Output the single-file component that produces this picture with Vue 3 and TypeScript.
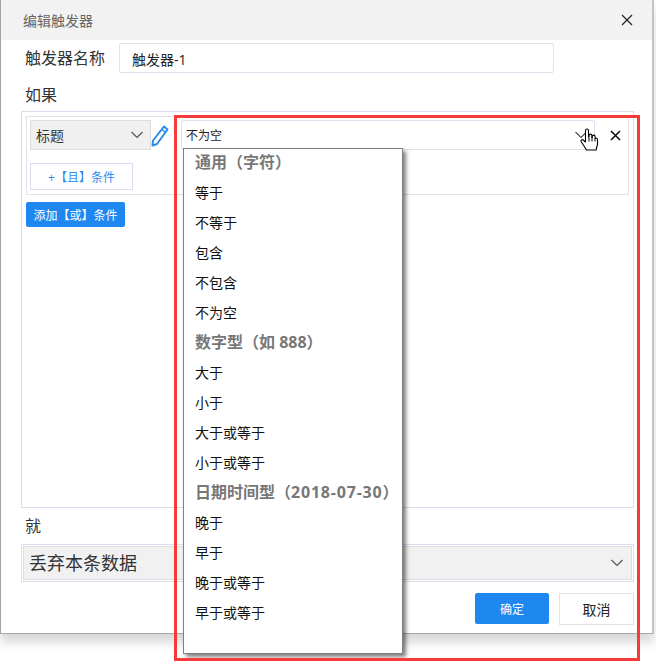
<script setup lang="ts">
type Row = { label: string; heading?: boolean; spaced?: string; tail?: string }
const options: Row[] = [
  { label: '通用（字符）', heading: true },
  { label: '等于' },
  { label: '不等于' },
  { label: '包含' },
  { label: '不包含' },
  { label: '不为空' },
  { label: '数字型（如 888）', heading: true },
  { label: '大于' },
  { label: '小于' },
  { label: '大于或等于' },
  { label: '小于或等于' },
  { label: '日期时间型（', heading: true, spaced: '2018-07-30', tail: '）' },
  { label: '晚于' },
  { label: '早于' },
  { label: '晚于或等于' },
  { label: '早于或等于' },
]
</script>

<template>
  <div class="page">
    <div class="dialog">
      <header class="head">
        <span class="title">编辑触发器</span>
        <svg class="close" width="12" height="12" viewBox="0 0 12 12"><path d="M1 1l10 10M11 1L1 11" stroke="#222" stroke-width="1.2" fill="none" /></svg>
      </header>
      <div class="body">
        <div class="name-row">
          <label class="label">触发器名称</label>
          <div class="name-input">触发器-1</div>
        </div>
        <div class="label if-label">如果</div>
        <section class="rules">
          <div class="and-box">
            <div class="cond">
              <div class="field-select">
                <span>标题</span>
                <svg width="14" height="8" viewBox="0 0 14 8"><path d="M1.5 1l5.5 5.5L12.5 1" stroke="#555" stroke-width="1.2" fill="none" /></svg>
              </div>
              <svg class="pencil" width="18" height="22" viewBox="0 0 18 22">
                <path d="M13 1.500l3.500 3L6 19l-4.500 1.500L2 15.500z" fill="none" stroke="#2a8cea" stroke-width="2" stroke-linejoin="round" />
                <path d="M11 4.500l3.500 3" stroke="#2a8cea" stroke-width="1.500" />
              </svg>
              <div class="op-input">
                <span>不为空</span>
                <svg class="op-arrow" width="14" height="8" viewBox="0 0 14 8"><path d="M1.500 1l5.500 5.500L12.500 1" stroke="#555" stroke-width="1.200" fill="none" /></svg>
              </div>
              <svg class="del" width="11" height="11" viewBox="0 0 11 11"><path d="M1 1l9 9M10 1l-9 9" stroke="#111" stroke-width="1.600" fill="none" /></svg>
            </div>
            <button class="add-and">+【且】条件</button>
          </div>
          <button class="add-or">添加【或】条件</button>
        </section>
        <div class="label then-label">就</div>
        <div class="action-wrap">
          <div class="action-select">
            <span class="action-text">丢弃本条数据</span>
            <svg width="14" height="8" viewBox="0 0 14 8"><path d="M1.500 1l5.500 5.500L12.500 1" stroke="#555" stroke-width="1.200" fill="none" /></svg>
          </div>
        </div>
        <div class="actions">
          <button class="ok">确定</button>
          <button class="cancel">取消</button>
        </div>
      </div>
    </div>

    <ul class="menu">
      <li v-for="o in options" :key="o.label" :class="{ heading: o.heading }">{{ o.label }}<span v-if="o.spaced" class="spaced">{{ o.spaced }}</span>{{ o.tail }}</li>
    </ul>
    <div class="red-box"></div>
    <svg class="hand" width="20" height="24" viewBox="0 0 20 24">
      <path d="M6.500 14V2.500a1.500 1.500 0 0 1 3 0V9h.5V7.500a1.400 1.400 0 0 1 2.800 0V9.500h.5V8.500a1.400 1.400 0 0 1 2.800 0V10.500h.3a1.300 1.300 0 0 1 2.100 1V16.500l-1.500 5.500H7.500L5 18 2 13.500a1.400 1.400 0 0 1 2.200-1.500z" fill="#fff" stroke="#000" stroke-width="1.100" stroke-linejoin="round" />
      <path d="M10 9.500v4M13 9.500v4M16 10.500v3" stroke="#000" stroke-width="1" fill="none" />
    </svg>
  </div>
</template>

<style>
html, body { margin: 0; background: #fff; }
</style>

<style scoped>
.page {
  position: relative;
  width: 656px;
  height: 663px;
  overflow: hidden;
  font-family: "Open Sans", "Noto Sans CJK SC", sans-serif;
  color: #333;
}
.dialog {
  width: 654px;
  height: 634px;
  box-sizing: border-box;
  background: #fff;
  border-left: 1px solid #a3a3a3;
  border-right: 2px solid #c4c4c4;
  border-bottom: 1px solid #a8a8a8;
  box-shadow: 0 8px 10px rgba(0, 0, 0, 0.16);
}
.head {
  height: 40px;
  background: #f2f2f2;
  display: flex;
  align-items: center;
  justify-content: space-between;
  padding: 0 19px 0 22px;
}
.title { font-size: 14px; color: #666; }
.body { padding: 3px 18px 0 20px; }
.label { font-size: 16px; line-height: 22px; color: #333; }
.name-row { display: flex; align-items: center; height: 30px; padding-left: 4px; }
.name-row .label { width: 94px; flex: none; }
.name-input {
  width: 435px;
  height: 30px;
  box-sizing: border-box;
  border: 1px solid #e0e0ee;
  border-radius: 2px;
  padding-left: 12px;
  font-size: 14px;
  line-height: 31px;
  color: #222;
}
.if-label { margin: 11px 0 5px 4px; }
.rules {
  height: 397px;
  box-sizing: border-box;
  border: 1px solid #dcdcec;
  padding: 4px 4px;
  margin-bottom: 7px;
}
.and-box {
  height: 79px;
  box-sizing: border-box;
  border: 1px solid #e0e0ee;
  padding: 3px;
  width: 603px;
}
.cond { display: flex; align-items: center; height: 30px; }
.field-select {
  width: 121px;
  height: 30px;
  box-sizing: border-box;
  background: #f0f0f0;
  border: 1px solid #ddd;
  display: flex;
  align-items: center;
  justify-content: space-between;
  padding: 0 6px 0 5px;
  font-size: 14px;
  color: #333;
}
.pencil { margin: 1px 12px 0 0; flex: none; }
.op-input {
  width: 414px;
  height: 30px;
  box-sizing: border-box;
  border: 1px solid #e0e0ee;
  border-radius: 2px;
  display: flex;
  align-items: center;
  justify-content: space-between;
  padding: 0 4px;
  font-size: 12px;
  color: #222;
}
.op-arrow { margin-right: 2px; }
.del { margin-left: 15px; flex: none; }
.add-and {
  display: block;
  margin-top: 13px;
  width: 103px;
  height: 27px;
  box-sizing: border-box;
  border: 1px solid #dcdcf0;
  background: #fff;
  color: #2d8cf0;
  font: 12px "Open Sans", "Noto Sans CJK SC", sans-serif;
  padding: 0;
}
.add-or {
  display: block;
  margin-top: 7px;
  width: 99px;
  height: 25px;
  border: none;
  border-radius: 2px;
  background: #1e88f0;
  color: #fff;
  font: 12px "Open Sans", "Noto Sans CJK SC", sans-serif;
  padding: 0;
}
.then-label { margin: 0 0 7px 4px; font-size: 16px; }
.action-wrap {
  height: 38px;
  box-sizing: border-box;
  border: 1px solid #dcdcf0;
  padding: 1px;
}
.action-select {
  height: 34px;
  box-sizing: border-box;
  background: #f1f1f1;
  border: 1px solid #ddd;
  display: flex;
  align-items: center;
  justify-content: space-between;
  padding: 0 7px 0 5px;
  font-size: 18px;
  color: #333;
}
.action-text { margin-bottom: 2px; }
.actions { display: flex; justify-content: flex-end; gap: 10px; margin-top: 11px; }
.ok, .cancel {
  height: 31px;
  font: 12px "Open Sans", "Noto Sans CJK SC", sans-serif;
  padding: 0;
  box-sizing: border-box;
}
.ok { width: 74px; border: none; border-radius: 2px; background: #1e88f0; color: #fff; }
.cancel { width: 75px; height: 32px; border: 1px solid #e2e2e2; background: #fff; color: #222; font-size: 14px; }
.menu {
  position: absolute;
  left: 183px;
  top: 148px;
  width: 220px;
  height: 506px;
  box-sizing: border-box;
  margin: 0;
  padding: 0 0 0 11px;
  list-style: none;
  background: #fff;
  border: 1px solid #808080;
  box-shadow: 3px 3px 4px rgba(0, 0, 0, 0.5);
}
.menu li {
  height: 30px;
  line-height: 32px;
  font-size: 14px;
  color: #111;
  white-space: nowrap;
}
.menu li:first-child { margin-top: -2px; }
.menu li.heading { line-height: 30px; font-size: 16px; font-weight: 700; color: #777; }
.spaced { letter-spacing: 0.8px; }
.red-box {
  position: absolute;
  left: 174px;
  top: 115px;
  width: 466px;
  height: 546px;
  box-sizing: border-box;
  border: 3px solid #f53a3a;
  pointer-events: none;
}
.hand { position: absolute; left: 579px; top: 128px; }
button { cursor: pointer; }
</style>
